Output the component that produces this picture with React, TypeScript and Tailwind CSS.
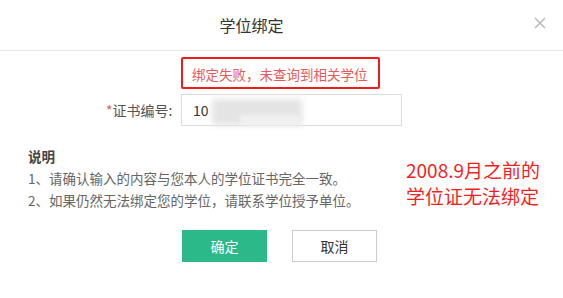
export default function App() {
  return (
    <div
      className="w-[563px] h-[298px] bg-white overflow-hidden text-[#333]"
      style={{ fontFamily: '"Microsoft YaHei", "Noto Sans CJK SC", sans-serif' }}
    >
      {/* header */}
      <div className="relative h-[51px] border-b border-[#e5e5e5] flex items-center justify-center">
        <span className="text-[16px] text-[#333] ml-[-60px]">学位绑定</span>
        <svg
          className="absolute right-[17px] top-[17px]"
          width="12"
          height="12"
          viewBox="0 0 12 12"
        >
          <path d="M1 1 L11 11 M11 1 L1 11" stroke="#bbb" strokeWidth="1.6" />
        </svg>
      </div>

      {/* error */}
      <div className="pl-[181px] pt-[6px]">
        <div className="w-[199px] h-[32px] border-2 border-[#ee1c1c] rounded-[2px] flex items-center pl-[9px] pt-[3px]">
          <span className="text-[13.5px] text-[#e85a5a] whitespace-nowrap">绑定失败，未查询到相关学位</span>
        </div>
      </div>

      {/* field */}
      <div className="flex items-center mt-[5px] pl-[106px]">
        <span className="text-[14px] text-[#555] w-[75px] whitespace-nowrap">
          <span className="text-[#e85a5a]">*</span>证书编号:
        </span>
        <div className="relative w-[221px] h-[32px] border border-[#ddd] flex items-center pl-[11px]">
          <span className="text-[14px] text-[#333]">10</span>
          <div className="absolute left-[30px] top-[4px] w-[90px] h-[26px] bg-[#e4e4e4] blur-[3px]" />
          <div className="absolute left-[58px] top-[20px] w-[60px] h-[10px] bg-[#f0f0f0] blur-[2px]" />
        </div>
      </div>

      {/* notes + annotation */}
      <div className="flex mt-[19px]">
        <div className="pl-[28px] w-[400px] text-[13.5px] text-[#666]">
          <div className="font-bold text-[#444] leading-[22px]">说明</div>
          <div className="leading-[22px]">1、请确认输入的内容与您本人的学位证书完全一致。</div>
          <div className="leading-[22px]">2、如果仍然无法绑定您的学位，请联系学位授予单位。</div>
        </div>
        <div className="pl-[6px] pt-[12px] text-[19px] leading-[26px] text-[#f41e1e] whitespace-nowrap">
          <div>2008.9月之前的</div>
          <div>学位证无法绑定</div>
        </div>
      </div>

      {/* buttons */}
      <div className="flex pl-[182px] gap-[25px] mt-[19px]">
        <button className="w-[85px] h-[32px] bg-[#2cb98a] text-white text-[14px]">确定</button>
        <button className="w-[85px] h-[32px] bg-white border border-[#ccc] text-[#333] text-[14px]">取消</button>
      </div>
    </div>
  );
}
